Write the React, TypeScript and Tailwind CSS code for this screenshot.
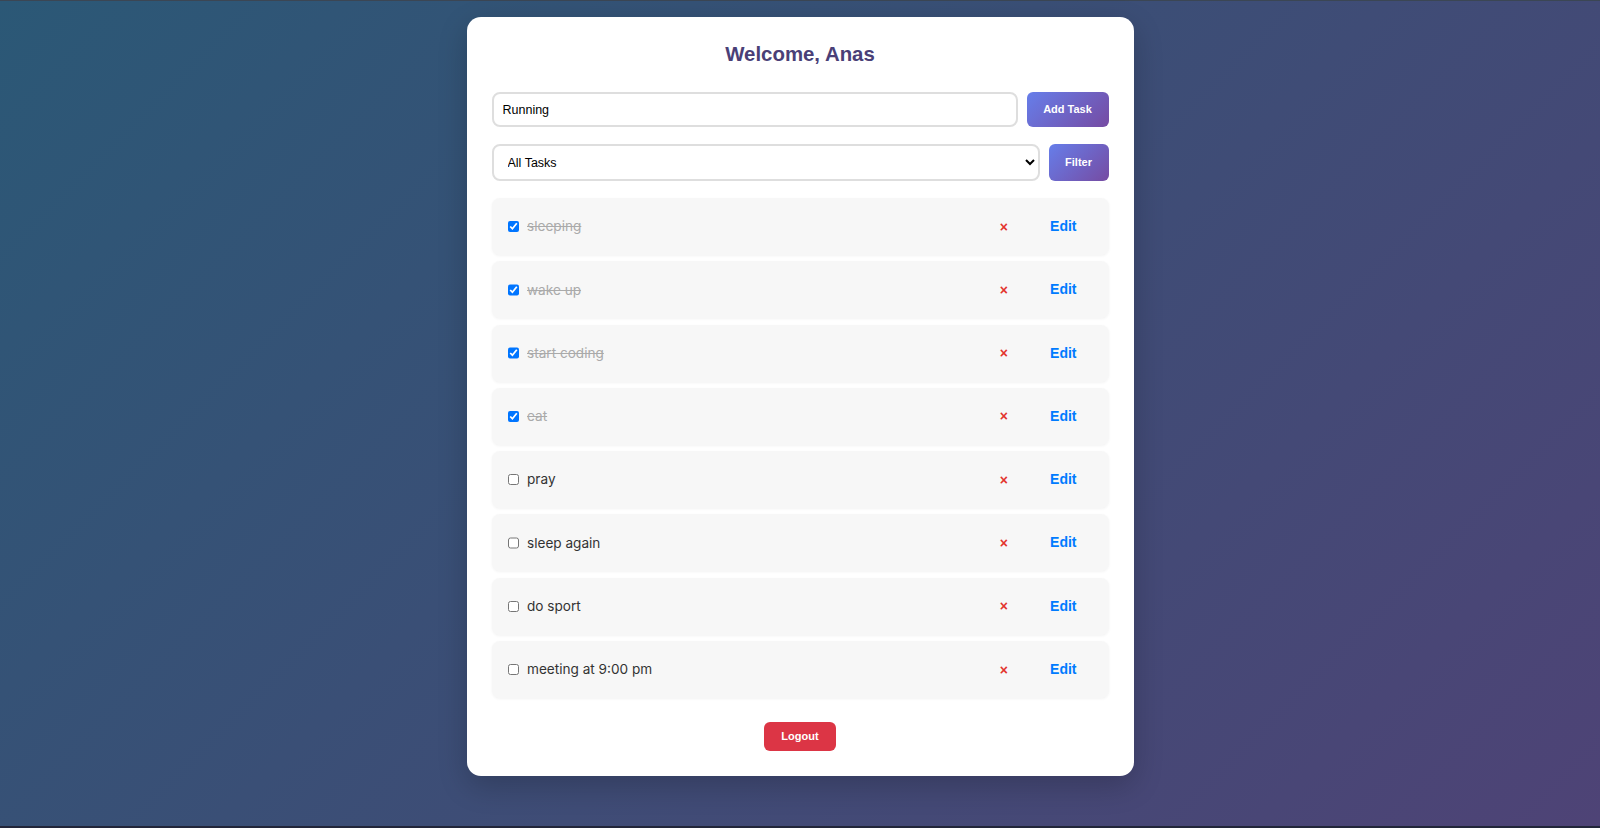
const TASKS = [
  { text: "sleeping", done: true },
  { text: "wake up", done: true },
  { text: "start coding", done: true },
  { text: "eat", done: true },
  { text: "pray", done: false },
  { text: "sleep again", done: false },
  { text: "do sport", done: false },
  { text: "meeting at 9:00 pm", done: false },
];

export default function App() {
  return (
    <div className="min-h-screen flex flex-col border-t border-[#3b4654] bg-[linear-gradient(135deg,#2b5876,#4e4376)] font-['Liberation_Sans',Arial,sans-serif]">
      <div className="flex-1 pt-[16px]">
        <div className="w-[667px] mx-auto bg-white rounded-[14px] px-[25px] pt-[25px] pb-[25px] shadow-[0_10px_30px_rgba(0,0,0,0.2)]">
          <h2 className="text-center text-[20.4px] leading-[24px] font-bold text-[#4a3f77]">Welcome, Anas</h2>

          {/* Add task */}
          <div className="mt-[26px] flex gap-[9px]">
            <input
              type="text"
              defaultValue="Running"
              className="flex-1 h-[35px] bg-white border-2 border-[#dedede] rounded-[8px] px-[9px] text-[12.5px] text-black outline-none"
            />
            <button className="w-[82px] rounded-[6px] text-white text-[11px] font-bold bg-[linear-gradient(135deg,#667eea,#764ba2)]">
              Add Task
            </button>
          </div>

          {/* Filter */}
          <div className="mt-[17px] flex gap-[9px]">
            <select className="flex-1 h-[37px] bg-white border-2 border-[#dedede] rounded-[8px] px-[10px] text-[12.5px] text-black outline-none">
              <option>All Tasks</option>
              <option>Completed</option>
              <option>Pending</option>
            </select>
            <button className="w-[60px] rounded-[6px] text-white text-[11px] font-bold bg-[linear-gradient(135deg,#667eea,#764ba2)]">
              Filter
            </button>
          </div>

          {/* Tasks */}
          <div className="mt-[17px] flex flex-col gap-[6.3px]">
            {TASKS.map(t => (
              <div key={t.text} className="h-[57px] flex items-center pl-[16px] pr-[32px] rounded-[8px] bg-[#f7f7f7] shadow-[0_1px_3px_rgba(0,0,0,0.05)]">
                <input type="checkbox" defaultChecked={t.done} className="w-[11.5px] h-[11.5px] mr-[8px]" />
                <span className={`flex-1 font-['Inter',sans-serif] text-[13.6px] ${t.done ? "line-through text-[#aaaaaa]" : "text-[#333333]"}`}>
                  {t.text}
                </span>
                <button className="text-[#e3342f] font-bold text-[14px] leading-none">×</button>
                <button className="ml-[42px] text-[#007bff] font-bold text-[14px]">Edit</button>
              </div>
            ))}
          </div>

          <div className="mt-[24px] flex justify-center">
            <button className="h-[29px] w-[72px] rounded-[6px] bg-[#dc3545] text-white text-[11px] font-bold">Logout</button>
          </div>
        </div>
      </div>
      <div className="h-[2px] bg-[#22263a]" />
    </div>
  );
}
